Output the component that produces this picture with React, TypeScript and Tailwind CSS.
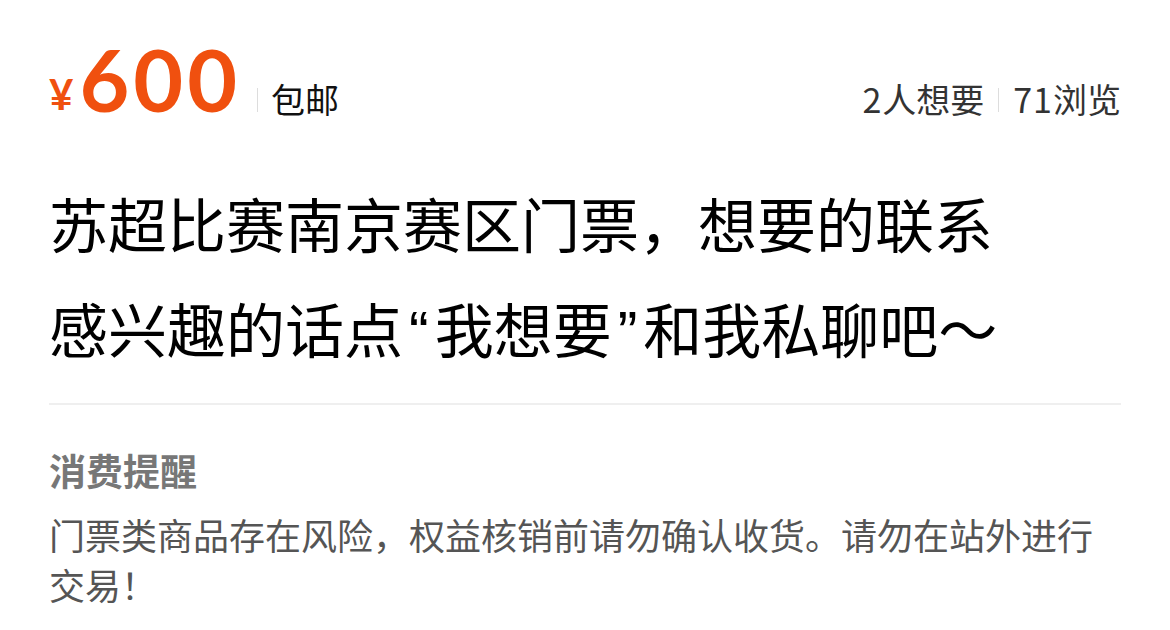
export default function App() {
  const cjk = { fontFamily: '"Noto Sans CJK SC", "Noto Sans", sans-serif' }
  const latin = { fontFamily: 'Lato, sans-serif' }
  const quote = { fontFamily: '"Liberation Sans", sans-serif' }
  return (
    <div className="w-[1170px] h-[630px] bg-white overflow-hidden px-[49px]" style={cjk}>
      {/* price row */}
      <div className="flex items-end justify-between h-[120px] pb-[4px]">
        <div className="flex items-end">
          <span className="text-[#f0500f] text-[42px] font-bold leading-none mb-[1px] mr-[6px]" style={latin}>¥</span>
          <span className="text-[#f0500f] text-[86px] font-bold leading-none -mb-[6px] tracking-[4px]" style={latin}>600</span>
          <span className="w-px h-[24px] bg-[#ddd] ml-[16px] mr-[13px] mb-[4px]" />
          <span className="text-[34px] text-[#111] leading-none">包邮</span>
        </div>
        <div className="flex items-end text-[34px] text-[#333] leading-none">
          <span><span className="tracking-[1px]">2</span>人想要</span>
          <span className="w-px h-[24px] bg-[#ddd] mx-[14px] mb-[4px]" />
          <span><span className="tracking-[1px]">71</span>浏览</span>
        </div>
      </div>

      {/* title */}
      <div className="mt-[50px] text-[59px] leading-[105px] text-black">
        <div>苏超比赛南京赛区门票，想要的联系</div>
        <div>
          感兴趣的话点<span className="mx-[6px]" style={quote}>“</span>我想要<span className="mx-[6px]" style={quote}>”</span>和我私聊吧～
        </div>
      </div>

      <div className="h-[2px] bg-[#efefef] mt-[17px]" />

      {/* notice */}
      <div className="mt-[40px] text-[37px] font-bold text-[#777] leading-[50px]">消费提醒</div>
      <div className="mt-[14px] text-[36px] text-[#555] leading-[50px] w-[1070px]">
        门票类商品存在风险，权益核销前请勿确认收货。请勿在站外进行交易！
      </div>
    </div>
  )
}
